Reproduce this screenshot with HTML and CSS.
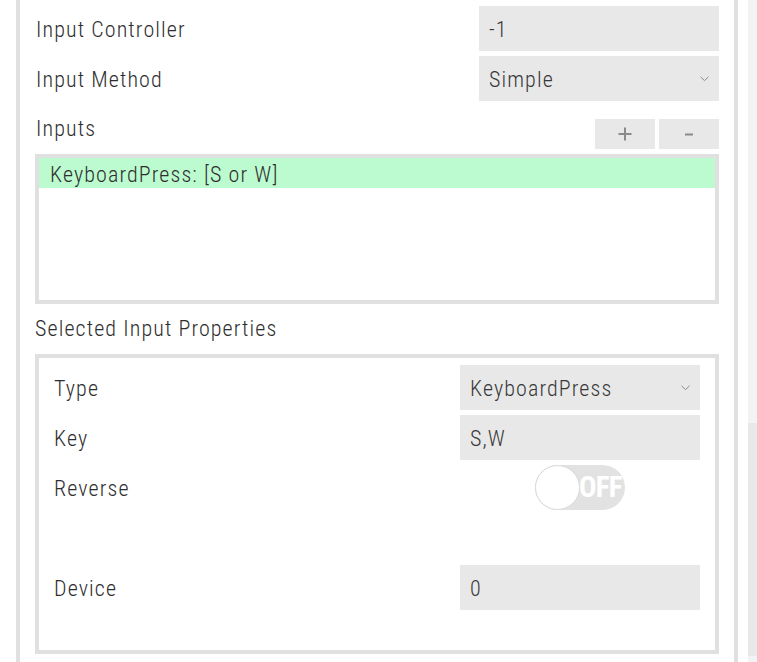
FILE: index.html
```html
<!DOCTYPE html>
<html>
<head>
<meta charset="utf-8">
<link rel="stylesheet" href="styles.css">
</head>
<body>
<div class="page">
  <div class="panel">
    <div class="row first">
      <div class="label">Input Controller</div>
      <div class="field">-1</div>
    </div>
    <div class="row">
      <div class="label">Input Method</div>
      <div class="field select">Simple
        <svg class="chev" width="9" height="6" viewBox="0 0 9 6"><polyline points="0.5,0.8 4.5,4.6 8.5,0.8" fill="none" stroke="#8c8c8c" stroke-width="1"/></svg>
      </div>
    </div>
    <div class="row inputs-row">
      <div class="label tall">Inputs</div>
      <div class="buttons">
        <div class="btn"><svg width="14" height="14" viewBox="0 0 14 14"><path d="M7 0.5V13.5M0.5 7H13.5" stroke="#8a8a8a" stroke-width="2"/></svg></div>
        <div class="btn"><svg width="8" height="3" viewBox="0 0 8 3"><path d="M0 1.5H8" stroke="#8a8a8a" stroke-width="2"/></svg></div>
      </div>
    </div>
    <div class="list">
      <div class="item">KeyboardPress: [S or W]</div>
    </div>
    <div class="section">Selected Input Properties</div>
    <div class="props">
      <div class="prow">
        <div class="label">Type</div>
        <div class="field select">KeyboardPress
          <svg class="chev" width="9" height="6" viewBox="0 0 9 6"><polyline points="0.5,0.8 4.5,4.6 8.5,0.8" fill="none" stroke="#8c8c8c" stroke-width="1"/></svg>
        </div>
      </div>
      <div class="prow">
        <div class="label">Key</div>
        <div class="field">S,W</div>
      </div>
      <div class="prow">
        <div class="label">Reverse</div>
        <div class="togglecell">
          <div class="toggle"><div class="knob"></div><span class="off">OFF</span></div>
        </div>
      </div>
      <div class="prow"></div>
      <div class="prow">
        <div class="label">Device</div>
        <div class="field">0</div>
      </div>
    </div>
  </div>
  <div class="scroll">
    <div class="thumb"></div>
  </div>
</div>
</body>
</html>
```
FILE: styles.css
```css
html, body {
  margin: 0;
  padding: 0;
  background: #ffffff;
}
body {
  font-family: "Roboto Condensed", "Roboto", "Liberation Sans", sans-serif;
  font-stretch: condensed;
  font-weight: 300;
  color: #2e2e2e;
  font-size: 22px;
  letter-spacing: 1.1px;
  overflow: hidden;
}
.page {
  display: flex;
  padding-left: 16px;
  height: 662px;
}
.panel {
  width: 722px;
  height: 662px;
  box-sizing: border-box;
  border-left: 4px solid #e0e0e0;
  border-right: 4px solid #e0e0e0;
  padding: 0 15px;
  display: flex;
  flex-direction: column;
}
.row {
  display: flex;
  align-items: center;
  height: 45px;
  margin-top: 5px;
}
.row.first {
  margin-top: 6px;
}
.label {
  flex: 1;
  padding-left: 1px;
  padding-top: 1px;
}
.field {
  width: 240px;
  height: 45px;
  box-sizing: border-box;
  background: #e8e8e8;
  padding-left: 10px;
  padding-top: 1px;
  display: flex;
  align-items: center;
  color: #383838;
  position: relative;
}
.chev {
  position: absolute;
  right: 10px;
  top: 20px;
}
.inputs-row {
  height: auto;
  align-items: flex-start;
  margin-top: 10px;
}
.label.tall {
  line-height: 36px;
  padding-top: 0;
}
.buttons {
  display: flex;
  gap: 4px;
  margin-top: 8px;
}
.btn {
  width: 60px;
  height: 30px;
  background: #e8e8e8;
  display: flex;
  align-items: center;
  justify-content: center;
}
.list {
  margin-top: 5px;
  height: 150px;
  box-sizing: border-box;
  border: 4px solid #e0e0e0;
}
.item {
  height: 30px;
  line-height: 34px;
  background: #bcfbcf;
  padding-left: 11px;
}
.section {
  line-height: 50px;
  height: 50px;
}
.props {
  height: 300px;
  box-sizing: border-box;
  border: 4px solid #e0e0e0;
  padding: 7px 15px 0 14px;
  display: flex;
  flex-direction: column;
  gap: 5px;
}
.prow {
  display: flex;
  align-items: center;
  height: 45px;
}
.togglecell {
  width: 240px;
  height: 45px;
  display: flex;
  justify-content: center;
  align-items: center;
}
.toggle {
  width: 90px;
  height: 45px;
  border-radius: 23px;
  background: #e2e2e2;
  position: relative;
  display: flex;
  align-items: center;
}
.knob {
  position: absolute;
  left: 0;
  top: 0;
  width: 45px;
  height: 45px;
  box-sizing: border-box;
  border-radius: 50%;
  background: #ffffff;
  border: 1.5px solid #dadada;
}
.off {
  margin-left: 44px;
  font-weight: 700;
  font-size: 29px;
  letter-spacing: -0.8px;
  color: #ffffff;
  line-height: 45px;
}
.scroll {
  width: 9px;
  height: 662px;
  margin-left: 10px;
  background: #f3f3f3;
  display: flex;
  flex-direction: column;
}
.thumb {
  margin-top: 423px;
  height: 233px;
  background: #e8e8e8;
}
```
